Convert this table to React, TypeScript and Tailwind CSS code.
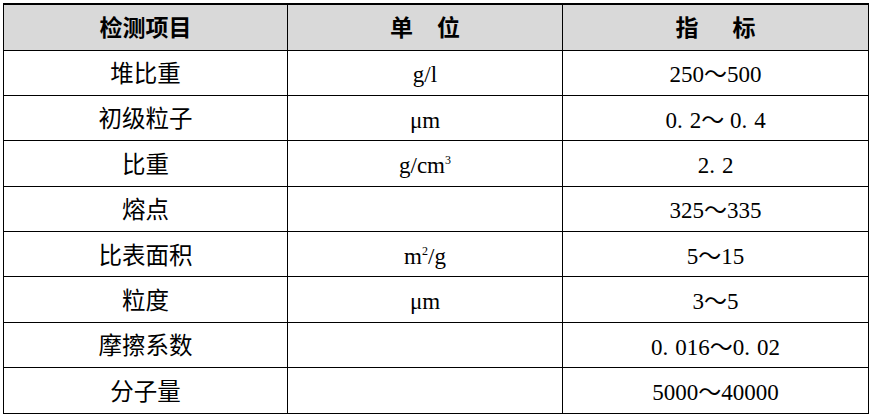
import React from "react";

const sup = "text-[12px] relative -top-[9px]";

function num(s: string): React.ReactNode {
  const parts = s.split(".");
  return parts.map((p, i) => (
    <React.Fragment key={i}>
      {p}
      {i < parts.length - 1 && <span className="pr-[7px]">.</span>}
    </React.Fragment>
  ));
}

const rows: [string, React.ReactNode, string][] = [
  ["堆比重", "g/l", "250～500"],
  ["初级粒子", "μm", "0.2～ 0.4"],
  ["比重", <>g/cm<sup className={sup}>3</sup></>, "2.2"],
  ["熔点", "", "325～335"],
  ["比表面积", <>m<sup className={sup}>2</sup>/g</>, "5～15"],
  ["粒度", "μm", "3～5"],
  ["摩擦系数", "", "0.016～0.02"],
  ["分子量", "", "5000～40000"],
];

const font = { fontFamily: '"Liberation Serif", "Noto Sans CJK SC", serif' };

export default function App() {
  return (
    <div className="w-[874px] h-[417px] bg-white pl-[3px] pt-[3px]" style={font}>
      <table className="table-fixed border-collapse w-[865px] text-black">
        <colgroup>
          <col className="w-[284px]" />
          <col className="w-[275px]" />
          <col className="w-[306px]" />
        </colgroup>
        <thead>
          <tr className="h-[46px] bg-[#d9d9d9]">
            <th className="border border-black border-t-2 text-[23px] font-bold text-center align-middle pt-[2px] leading-none">检测项目</th>
            <th className="border border-black border-t-2 text-[23px] font-bold text-center align-middle pt-[2px] leading-none">
              <span>单</span><span className="ml-[24px]">位</span>
            </th>
            <th className="border border-black border-t-2 text-[23px] font-bold text-center align-middle pt-[2px] leading-none">
              <span>指</span><span className="ml-[34px]">标</span>
            </th>
          </tr>
        </thead>
        <tbody>
          {rows.map((r, i) => (
            <tr key={i} className="h-[45.4px]">
              <td className="border border-black text-[23.5px] text-center align-middle pt-[4px] leading-none">{r[0]}</td>
              <td className="border border-black text-[23px] text-center align-middle pt-[4px] leading-none">{r[1]}</td>
              <td className="border border-black text-[23px] text-center align-middle pt-[4px] leading-none">{num(r[2])}</td>
            </tr>
          ))}
        </tbody>
      </table>
    </div>
  );
}
